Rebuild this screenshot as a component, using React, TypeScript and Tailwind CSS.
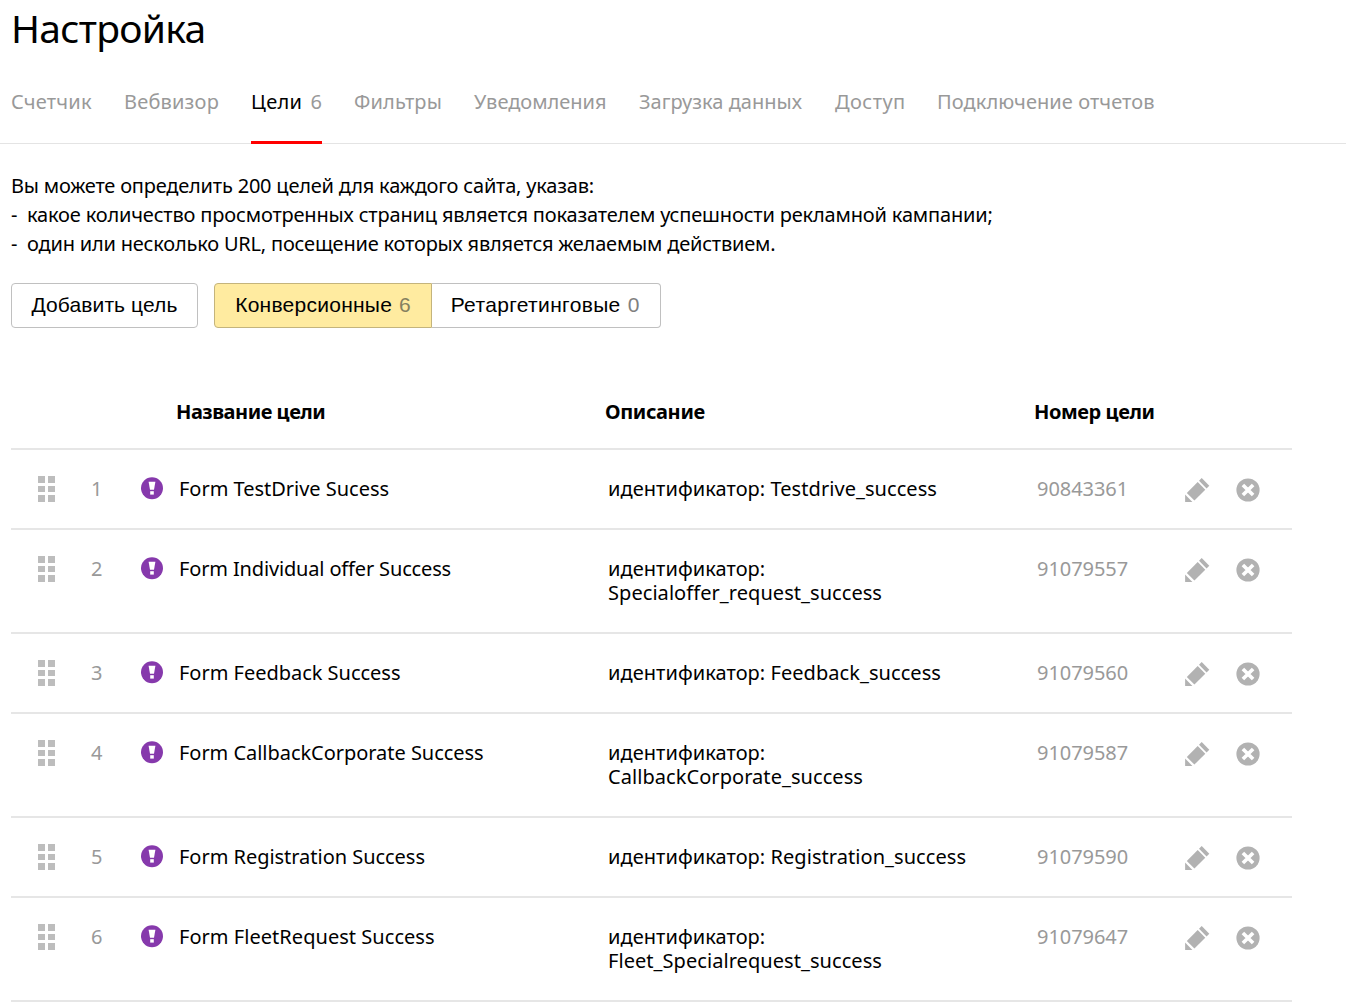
import React from "react";

type Goal = {
  id: number;
  name: string;
  nameClass: string;
  descr: string;
  code: string;
  rowClass: string;
};

const tabs = [
  { label: "Счетчик", className: "w-[81px] tracking-[0.25px]" },
  { label: "Вебвизор", className: "w-[95px] tracking-[0.19px]" },
  { label: "Цели", count: 6, className: "w-[71px] tracking-[0.35px]" },
  { label: "Фильтры", className: "w-[88px] tracking-[0.17px]" },
  { label: "Уведомления", className: "w-[133px] tracking-[-0.01px]" },
  { label: "Загрузка данных", className: "w-[164px] tracking-[0.02px]" },
  { label: "Доступ", className: "w-[70px] tracking-[0.45px]" },
  { label: "Подключение отчетов", className: "w-[218px] tracking-[0.07px]" },
];

const goals: Goal[] = [
  { id: 1, name: "Form TestDrive Sucess", nameClass: "tracking-[-0.02px]", descr: "Testdrive_success", code: "90843361", rowClass: "h-20" },
  { id: 2, name: "Form Individual offer Success", nameClass: "tracking-[-0.15px]", descr: "Specialoffer_request_success", code: "91079557", rowClass: "h-[104px]" },
  { id: 3, name: "Form Feedback Success", nameClass: "tracking-[-0.02px]", descr: "Feedback_success", code: "91079560", rowClass: "h-20" },
  { id: 4, name: "Form CallbackCorporate Success", nameClass: "tracking-[-0.04px]", descr: "CallbackCorporate_success", code: "91079587", rowClass: "h-[104px]" },
  { id: 5, name: "Form Registration Success", nameClass: "tracking-[-0.03px]", descr: "Registration_success", code: "91079590", rowClass: "h-20" },
  { id: 6, name: "Form FleetRequest Success", nameClass: "tracking-[0.04px]", descr: "Fleet_Specialrequest_success", code: "91079647", rowClass: "h-[104px]" },
];

const DragHandle = () => (
  <div className="grid grid-cols-2 gap-[3px] w-[17px]">
    {[0, 1, 2, 3, 4, 5].map((i) => (
      <span key={i} className="h-[6.7px] bg-[#bdbdbd]" />
    ))}
  </div>
);

const AlertIcon = () => (
  <svg width="23" height="23" viewBox="0 0 23 23">
    <circle cx="11" cy="11.2" r="11" fill="#8639ac" />
    <path d="M7.6 4.8h6.8l-1.4 8H9z" fill="#fff" />
    <rect x="9.2" y="14.2" width="3.6" height="3.4" fill="#fff" />
  </svg>
);

const PencilIcon = () => (
  <svg width="25" height="25" viewBox="0 0 25 25" fill="#b2b2b2">
    <path d="M16.7 0.1l7.6 7.6-2.7 2.7L14 2.8z" />
    <path d="M12.7 4.1l7.6 7.6L9.4 22.6 1.8 15z" />
    <path d="M0.1 16.5l7.3 7.4H0.1z" />
  </svg>
);

const RemoveIcon = () => (
  <svg width="24" height="24" viewBox="0 0 24 24">
    <circle cx="12" cy="12" r="11.6" fill="#b2b2b2" />
    <path d="M6.9 6.9l10.2 10.2M17.1 6.9L6.9 17.1" stroke="#fff" strokeWidth="3.6" />
  </svg>
);

const App = () => {
  return (
    <div className="h-[1007px] overflow-hidden bg-white text-black text-[20px] leading-6 whitespace-nowrap font-['Noto_Sans',sans-serif]">
      <h1 className="pt-[4px] pl-[11px] text-[39px] leading-[48px] tracking-[-0.7px]">Настройка</h1>

      {/* Tabs */}
      <nav className="flex gap-8 mt-[38px] pl-[11px] h-[54px] border-b border-[#e4e4e4] text-[#999]">
        {tabs.map((tab) => (
          <div
            key={tab.label}
            className={`shrink-0 h-[54px] ${tab.className} ${tab.count ? "flex justify-between text-black border-b-3 border-[#f00]" : ""}`}
          >
            {tab.label}
            {tab.count && <span className="text-[#999] tracking-normal">{tab.count}</span>}
          </div>
        ))}
      </nav>

      {/* Description */}
      <div className="mt-[27px] pl-[11px] leading-[29px]">
        <p className="tracking-[-0.2px]">Вы можете определить 200 целей для каждого сайта, указав:</p>
        <p className="flex tracking-[-0.17px]">
          <span className="w-[16px]">-</span>какое количество просмотренных страниц является показателем успешности рекламной кампании;
        </p>
        <p className="flex tracking-[-0.2px]">
          <span className="w-[16px]">-</span>один или несколько URL, посещение которых является желаемым действием.
        </p>
      </div>

      {/* Buttons */}
      <div className="flex mt-[25px] pl-[11px] text-[21px] font-['Liberation_Sans',sans-serif]">
        <button className="w-[187px] h-[45px] pb-px mr-4 rounded-[4px] border border-[#c0c0c0] tracking-[0.1px]">
          Добавить цель
        </button>
        <button className="w-[218px] h-[45px] pb-px rounded-l-[4px] border border-[#c4b47c] bg-[#ffeba0]">
          <span className="tracking-[0.25px]">Конверсионные</span>
          <span className="ml-[7px] text-[#85805f]">6</span>
        </button>
        <button className="w-[229px] h-[45px] pb-px pr-[2px] rounded-r-[4px] border border-l-0 border-[#c0c0c0]">
          <span className="tracking-[0.35px]">Ретаргетинговые</span>
          <span className="ml-[7px] text-[#808080]">0</span>
        </button>
      </div>

      {/* Goals table */}
      <div className="mt-[72px] ml-[11px] w-[1281px]">
        <div className="flex h-[50px] pl-[165px] border-b-2 border-[#e6e6e6] font-bold">
          <span className="w-[429px] tracking-[-0.48px]">Название цели</span>
          <span className="w-[429px] tracking-[-0.36px]">Описание</span>
          <span className="tracking-[-0.42px]">Номер цели</span>
        </div>

        {goals.map((goal) => (
          <div key={goal.id} className={`flex pt-[27px] border-b-2 border-[#e6e6e6] ${goal.rowClass}`}>
            <div className="w-[80px] pl-[27px] -mt-px">
              <DragHandle />
            </div>
            <span className="w-[50px] text-[#999]">{goal.id}</span>
            <div className="w-[38px]">
              <AlertIcon />
            </div>
            <span className={`w-[429px] ${goal.nameClass}`}>{goal.name}</span>
            <p className="w-[429px] pr-[40px] whitespace-normal tracking-[0.06px]">идентификатор: {goal.descr}</p>
            <span className="w-[148px] text-[#999] tracking-[-0.05px]">{goal.code}</span>
            <div className="w-[51px] pt-px">
              <PencilIcon />
            </div>
            <div className="pt-px">
              <RemoveIcon />
            </div>
          </div>
        ))}
      </div>
    </div>
  );
};

export default App;
